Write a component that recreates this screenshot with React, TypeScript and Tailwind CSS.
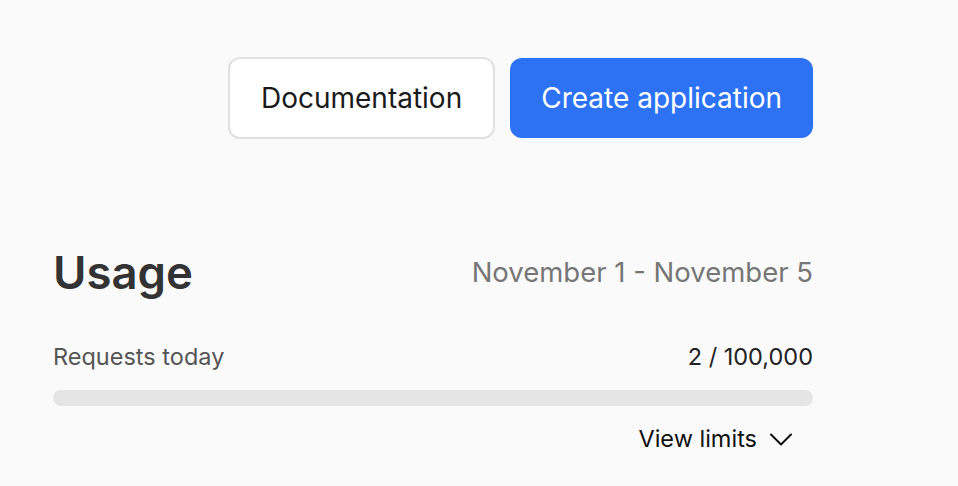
const font = { fontFamily: "Inter, 'Noto Sans', sans-serif" };

function Chevron() {
  return (
    <svg width="22" height="13" viewBox="0 0 22 13" fill="none" className="shrink-0">
      <path d="M1 1.5 11 11.5 21 1.5" stroke="#111111" strokeWidth="2" strokeLinecap="round" strokeLinejoin="round" />
    </svg>
  );
}

export default function App() {
  const used = 2;
  const limit = 100000;

  return (
    <div className="min-h-screen w-full bg-[#fafafa]" style={font}>
      <div className="ml-[53px] w-[760px] pt-[57px]">
        <div className="flex justify-end gap-[15px]">
          <button className="h-[82px] rounded-[12px] border-2 border-[#e0e0e0] bg-white px-[31px] text-[28px] text-[#1a1a1a]">
            Documentation
          </button>
          <button className="mt-px h-[80px] rounded-[12px] bg-[#2d72f5] px-[31px] text-[28px] text-white">
            Create application
          </button>
        </div>

        <div className="mt-[106px] flex h-[56px] items-center justify-between">
          <h1 className="text-[45.5px] leading-none font-semibold text-[#333333]">Usage</h1>
          <p className="text-[27.5px] leading-none text-[#767676]">November 1 - November 5</p>
        </div>

        <div className="mt-[41px] flex items-baseline justify-between">
          <span className="text-[23.5px] leading-[30px] text-[#555555]">Requests today</span>
          <span className="text-[23.5px] leading-[30px] text-[#222222]">
            {used} / {limit.toLocaleString("en-US")}
          </span>
        </div>

        <div className="mt-[18px] h-[16px] w-full rounded-full bg-[#e5e5e5]">
          <div
            className="h-full rounded-full bg-[#2d72f5]"
            style={{ width: `${(used / limit) * 100}%` }}
          />
        </div>

        <div className="mt-[18px] flex justify-end pr-[21px]">
          <button className="flex items-center gap-[13px] text-[23.5px] leading-[30px] text-[#111111]">
            View limits
            <Chevron />
          </button>
        </div>
      </div>
    </div>
  );
}
